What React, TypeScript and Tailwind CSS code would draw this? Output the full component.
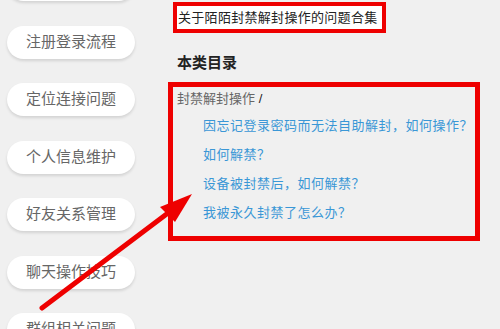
import React from 'react';

// first pill is scrolled almost out of view, its label is not visible
const categories = ['', '注册登录流程', '定位连接问题', '个人信息维护', '好友关系管理', '聊天操作技巧', '群组相关问题'];

const questions = [
  '因忘记登录密码而无法自助解封，如何操作？',
  '如何解禁？',
  '设备被封禁后，如何解禁？',
  '我被永久封禁了怎么办？',
];

export default function App() {
  return (
    <div
      className="relative w-[500px] h-[329px] overflow-hidden bg-[#f0f0f0] flex"
      style={{ fontFamily: '"Liberation Sans", "Noto Sans CJK SC", sans-serif' }}
    >
      {/* Category pills */}
      <div className="w-[168px] shrink-0 flex flex-col gap-[24.5px] pl-[7px] -mt-[32px]">
        {categories.map((c, i) => (
          <div
            key={i}
            className="w-[128px] h-[33px] shrink-0 rounded-full bg-white shadow-[0_2px_3px_rgba(0,0,0,0.12)] flex items-center justify-center text-[15px] text-[#666]"
          >
            {c}
          </div>
        ))}
      </div>

      {/* Content */}
      <div className="flex-1 flex flex-col pt-[2px]">
        <div className="ml-[5px] w-[213px] h-[31px] border-4 border-[#ee0000] bg-white flex items-center pl-[1px] text-[13px] text-[#222] tracking-[0.3px]">
          关于陌陌封禁解封操作的问题合集
        </div>

        <div className="ml-[9px] mt-[21px] text-[15px] font-bold text-[#222] leading-[18px]">本类目录</div>

        <div className="mt-[10px] w-[312px] h-[159px] border-[5px] border-[#ee0000] flex flex-col">
          <div className="pl-[4px] pt-[3px] text-[13px] leading-[18px] text-[#666]">
            封禁解封操作 <span className="text-[#222]">/</span>
          </div>
          <div className="pl-[30px] mt-[9px] flex flex-col gap-[11px]">
            {questions.map(q => (
              <div key={q} className="text-[13px] leading-[18px] text-[#3a97d6] tracking-[0.5px]">
                {q}
              </div>
            ))}
          </div>
        </div>
      </div>

      {/* Red arrow annotation */}
      <svg className="absolute left-0 top-0 pointer-events-none" width="500" height="329" viewBox="0 0 500 329">
        <line x1="42" y1="308" x2="172" y2="210" stroke="#ee0000" strokeWidth="5" strokeLinecap="round" />
        <polygon points="192,194 160,207 175,222" fill="#ee0000" />
      </svg>
    </div>
  );
}
